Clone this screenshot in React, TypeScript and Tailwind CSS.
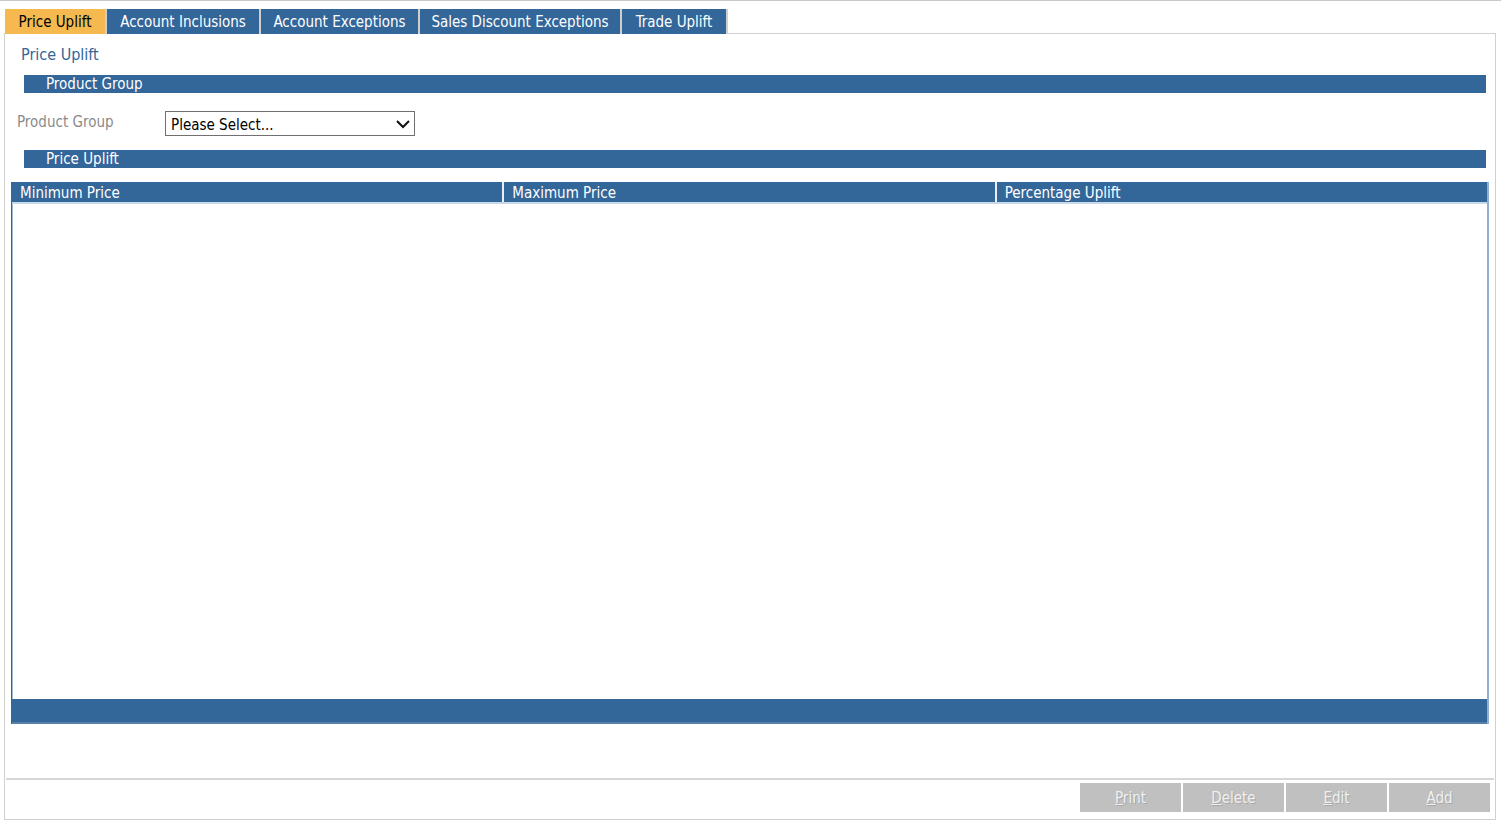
const TABS = [
  { label: "Price Uplift", w: "w-[102px]" },
  { label: "Account Inclusions", w: "w-[154px]" },
  { label: "Account Exceptions", w: "w-[159px]" },
  { label: "Sales Discount Exceptions", w: "w-[202px]" },
  { label: "Trade Uplift", w: "w-[106px]" },
];

const COLUMNS = ["Minimum Price", "Maximum Price", "Percentage Uplift"];

const BUTTONS = ["Print", "Delete", "Edit", "Add"];

function SectionBar({ title }: { title: string }) {
  return (
    <div className="ml-[19px] mr-[9px] h-[18px] bg-[#336699] pl-[22px] text-[15px] leading-[18px] text-white">
      {title}
    </div>
  );
}

export default function App() {
  return (
    <div
      className="h-[820px] w-[1501px] overflow-hidden border-t border-[#c8c8c8] bg-white text-[15px]"
      style={{ fontFamily: 'Tahoma, "DejaVu Sans Condensed", "DejaVu Sans", sans-serif' }}
    >
      {/* tabs */}
      <div className="relative z-10 -mb-px mt-[8px] flex pl-[5px]">
        {TABS.map((t, i) => (
          <div
            key={t.label}
            className={`h-[25px] ${t.w} border-r-2 border-[#cfcfcf] pt-[4px] text-center leading-[19px] ${
              i === 0 ? "bg-[#f5b94f] text-black" : "bg-[#336699] text-white"
            }`}
          >
            {t.label}
          </div>
        ))}
      </div>

      {/* panel */}
      <div className="ml-[4px] flex h-[787px] w-[1492px] flex-col border border-[#d0d0d0]">
        <div className="pl-[16px] pt-[11px] text-[16px] leading-[20px] text-[#336699]">Price Uplift</div>

        <div className="mt-[10px]">
          <SectionBar title="Product Group" />
        </div>

        <div className="mt-[18px] flex items-start pl-[12px]">
          <div className="w-[148px] text-[#8a8a8a]">Product Group</div>
          <div className="flex h-[25px] w-[250px] items-center justify-between border border-[#707070] bg-white pl-[5px] pr-[3px] text-black">
            <span className="pt-[3px]">Please Select...</span>
            <svg width="16" height="16" viewBox="0 0 16 16" fill="none">
              <path d="M2 5l6 6 6-6" stroke="#111" strokeWidth="2" />
            </svg>
          </div>
        </div>

        <div className="mt-[14px]">
          <SectionBar title="Price Uplift" />
        </div>

        {/* grid */}
        <div className="ml-[6px] mr-[6px] mt-[14px] flex h-[542px] flex-col border-l border-r-2 border-l-[#336699] border-r-[#8fb0d4]">
          <div className="flex h-[22px] border-b-2 border-[#c9d9ea] bg-[#336699] text-white">
            {COLUMNS.map((c, i) => (
              <div
                key={c}
                className={`flex-1 pl-[8px] pt-px leading-[20px] ${i > 0 ? "border-l-2 border-[#e6eef7]" : ""}`}
              >
                {c}
              </div>
            ))}
          </div>
          <div className="flex-1 border-l border-[#9fb8d4] bg-white" />
          <div className="h-[25px] border-b-2 border-[#5a80aa] bg-[#336699]" />
        </div>

        <div className="flex-1" />

        <div className="mx-px mb-px h-[2px] bg-[#d6d6d6]" />
        <div className="flex justify-end gap-[2px] pr-[5px] pt-[2px] pb-[7px]">
          {BUTTONS.map((b) => (
            <div
              key={b}
              className="flex h-[29px] w-[101px] items-center justify-center bg-[#c0c0c0] pt-[2px] text-[15px] text-[#f0f0f0]"
              style={{ textShadow: "1px 1px 0 #a8a8a8" }}
            >
              <span>
                <span className="underline">{b[0]}</span>
                {b.slice(1)}
              </span>
            </div>
          ))}
        </div>
      </div>
    </div>
  );
}
